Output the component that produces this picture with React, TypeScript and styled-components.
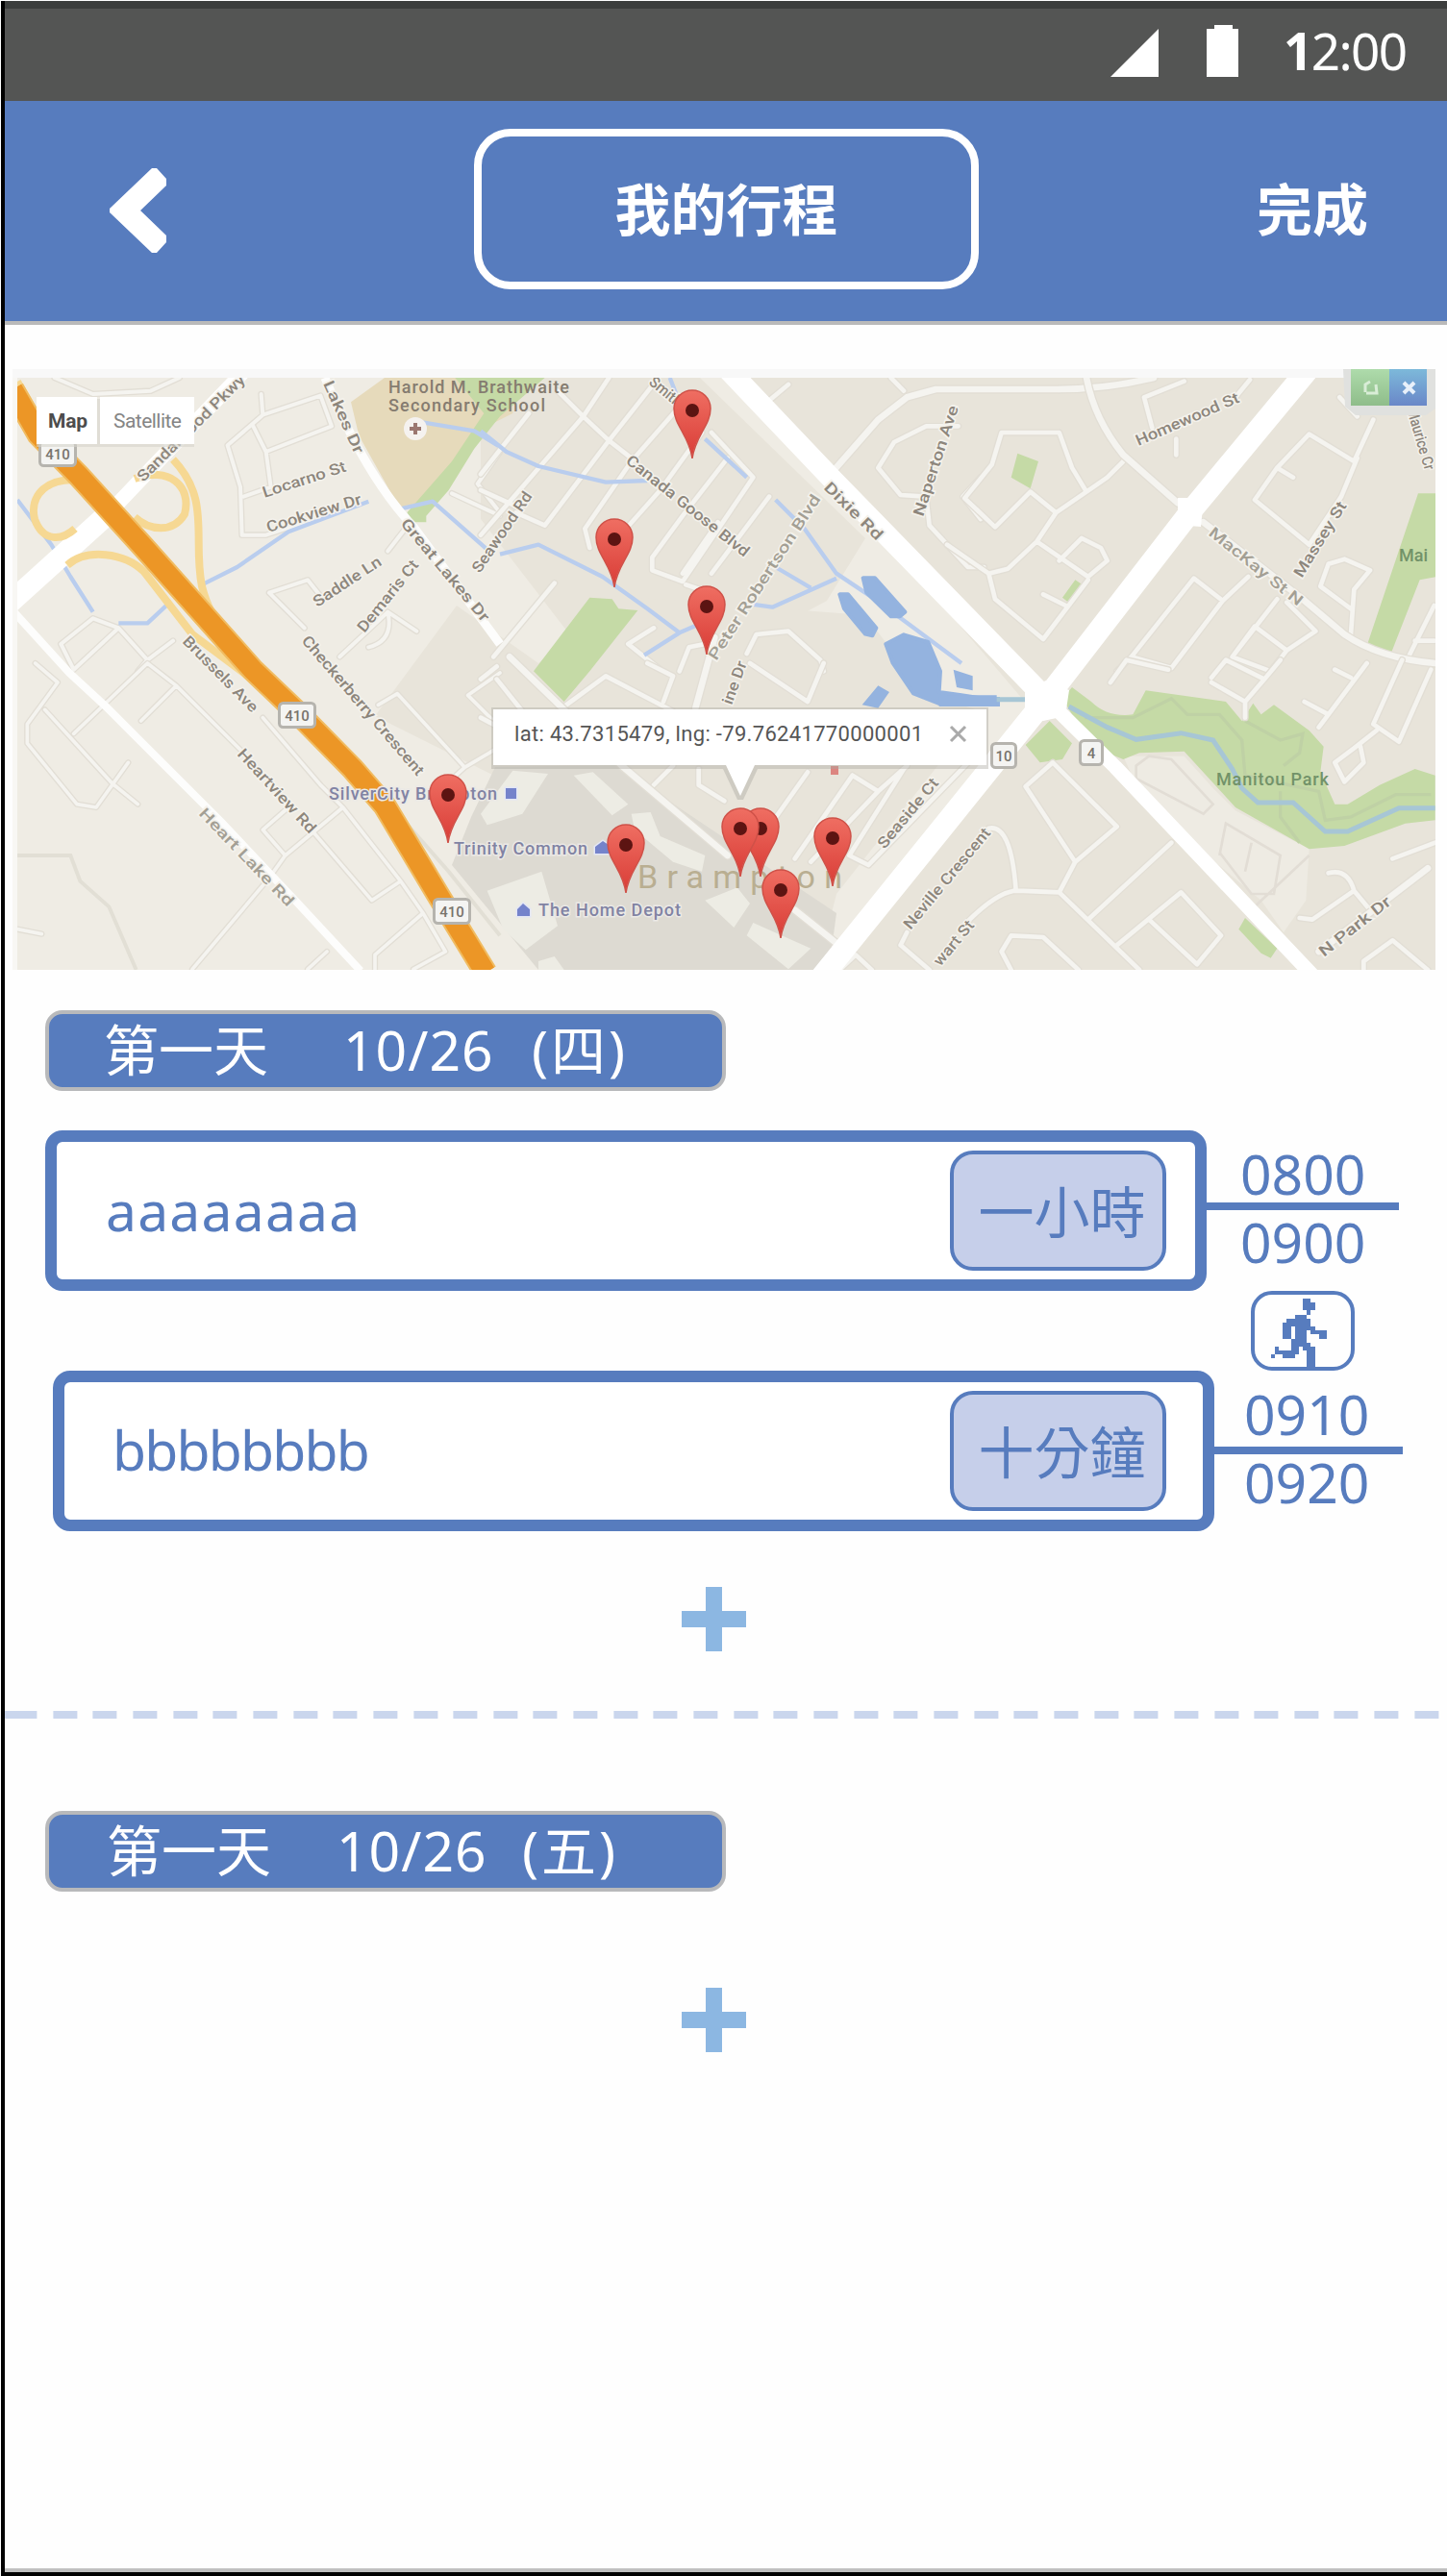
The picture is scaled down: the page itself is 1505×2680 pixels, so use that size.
import React from "react";
import styled, { createGlobalStyle } from "styled-components";

const BLUE = "#577cbe";
const MINOR = "#f5f4f0";

const GlobalStyle = createGlobalStyle`
  body { margin: 0; background: #fff; }
  * { box-sizing: border-box; }
`;

const Screen = styled.div`
  width: 1504px;
  height: 2679px;
  margin: 1px 0 0 1px;
  display: flex;
  flex-direction: column;
  border-left: 4px solid #000;
  border-bottom: 4px solid #000;
  background: #fefefe;
  color: ${BLUE};
  font-family: "Noto Sans", "Noto Sans CJK TC", sans-serif;
  font-size: 57px;
  line-height: 1;
  white-space: nowrap;
  overflow: hidden;
`;

const StatusBar = styled.div`
  flex: none;
  height: 104px;
  border-top: 8px solid #3c3e3d;
  background: #545554;
  color: #fff;
  display: flex;
  justify-content: flex-end;
  padding: 17px 40px 0 0;
`;

const StatusIcons = styled.svg`
  width: 134px;
  height: 54px;
  margin-right: 46px;
`;

const Clock = styled.div`
  width: 130px;
  font-size: 53px;
  line-height: 54px;
  letter-spacing: -1.6px;
  b { font-weight: 700; }
`;

const Header = styled.header`
  flex: none;
  height: 233px;
  border-bottom: 4px solid #bababa;
  background: ${BLUE};
  color: #fff;
  display: grid;
  grid-template-columns: 488px 525px 1fr;
  padding-top: 29px;
  font-weight: 700;
  font-size: 58px;
`;

const BackIcon = styled.svg`
  width: 60px;
  height: 88px;
  margin: 41px 0 0 108px;
`;

const Title = styled.h1`
  margin: 0;
  height: 167px;
  border: 8px solid #fff;
  border-radius: 38px;
  display: flex;
  align-items: center;
  justify-content: center;
  font: inherit;
`;

const Done = styled.div`
  height: 167px;
  display: flex;
  align-items: center;
  padding-left: 289px;
`;

const MapView = styled.svg`
  flex: none;
  display: block;
  width: 1480px;
  height: 625px;
  margin: 46px 0 42px 8px;
  font-family: Roboto, sans-serif;
`;

const DayLabel = styled.div<{ $indent: number; $gap: number }>`
  flex: none;
  width: 708px;
  height: 84px;
  margin-left: 42px;
  padding: 0 0 2px ${(p) => p.$indent}px;
  border: 4px solid #b8b9bb;
  border-radius: 18px;
  background: ${BLUE};
  color: #fff;
  display: flex;
  align-items: center;
  column-gap: ${(p) => p.$gap}px;
`;

const DayDate = styled.span`
  width: 150px;
  letter-spacing: 1px;
`;

const Weekday = styled.span<{ $pull: number }>`
  margin-left: -${(p) => p.$pull}px;
  letter-spacing: 3px;
`;

const Stop = styled.div<{ $shift?: number }>`
  flex: none;
  height: 167px;
  margin-left: ${(p) => 42 + (p.$shift || 0)}px;
  display: flex;
`;

const Card = styled.div`
  width: 1208px;
  height: 167px;
  border: 12px solid ${BLUE};
  border-radius: 18px;
  background: #fff;
  display: flex;
  justify-content: space-between;
  align-items: center;
`;

const Place = styled.div<{ $track: number; $lift: number; $left: number }>`
  padding: 0 0 ${(p) => p.$lift}px ${(p) => p.$left}px;
  letter-spacing: ${(p) => p.$track}px;
`;

const Duration = styled.div<{ $right: number }>`
  width: 225px;
  height: 125px;
  margin: 0 ${(p) => p.$right}px 0 0;
  padding: 2px 0 0 8px;
  border: 4px solid ${BLUE};
  border-radius: 24px;
  background: #c6cfea;
  font-size: 58px;
  display: flex;
  align-items: center;
  justify-content: center;
`;

const Times = styled.div<{ $top: number; $pad: number; $w: number }>`
  display: grid;
  grid-template-rows: ${(p) => p.$top}px 8px 1fr;
  width: ${(p) => p.$w}px;
  span { padding-left: ${(p) => p.$pad}px; letter-spacing: 0; }
  span:first-child { padding-top: 17px; }
  span:last-child { padding-top: ${(p) => 80 - p.$top}px; }
`;

const Rule = styled.div`
  background: ${BLUE};
`;

const Travel = styled.div`
  flex: none;
  width: 108px;
  height: 83px;
  margin-left: 1296px;
  border: 4px solid ${BLUE};
  border-radius: 22px;
  svg { display: block; width: 108px; height: 83px; margin: -4px; }
`;

const Plus = styled.button<{ $top: number }>`
  flex: none;
  width: 67px;
  height: 67px;
  margin: ${(p) => p.$top}px 0 0 704px;
  padding: 0;
  border: 0;
  background:
    linear-gradient(#8cb7e2, #8cb7e2) 0 25px / 67px 17px no-repeat,
    linear-gradient(#8cb7e2, #8cb7e2) 25px 0 / 17px 67px no-repeat;
`;

const Divider = styled.div`
  flex: none;
  height: 8px;
  margin: 62px 0 96px;
  background:
    linear-gradient(#cad6ed, #cad6ed) 0 0 / 10px 8px no-repeat,
    repeating-linear-gradient(90deg, #cad6ed 0 25px, transparent 25px 41.65px) 8.4px 0;
`;

const Gap = styled.div<{ $h: number }>`
  flex: none;
  height: ${(p) => p.$h}px;
`;

const BottomLine = styled.div`
  flex: none;
  height: 4px;
  margin-top: auto;
  background: #c0c0c0;
`;

/* Map sheets: each one is drawn on a 3x finer grid, placed by its corner. */
type SheetProps = { x: number; y: number; children: React.ReactNode };
const Sheet = ({ x, y, children }: SheetProps) => (
  <g transform={`translate(${x} ${y}) scale(0.33333)`}>{children}</g>
);

const Streets = ({ d, w = 14 }: { d: string; w?: number }) => (
  <g fill="none" strokeLinejoin="round" strokeLinecap="round">
    <path d={d} stroke="#e2ded5" strokeWidth={w + 8} />
    <path d={d} stroke={MINOR} strokeWidth={w} />
  </g>
);

const Water = ({ d }: { d: string }) => (
  <path d={d} fill="none" stroke="#b9cdee" strokeWidth={13} strokeLinejoin="round" />
);

const Green = ({ d }: { d: string }) => <path d={d} fill="#c5daa6" />;

type Name = [string, number, number, number, number, string?];
const NAMES: Name[] = [
  ["Sandalwood Pkwy", 149, 502, 256, 396],
  ["Lakes Dr", 336, 399, 369, 473],
  ["Great Lakes Dr", 416, 545, 502, 648],
  ["Locarno St", 275, 518, 361, 490],
  ["Cookview Dr", 279, 554, 377, 524],
  ["Saddle Ln", 330, 632, 398, 587],
  ["Demaris Ct", 379, 659, 436, 588],
  ["Brussels Ave", 189, 668, 262, 742],
  ["Checkerberry Crescent", 313, 667, 434, 808],
  ["Heartview Rd", 246, 785, 322, 868],
  ["Heart Lake Rd", 206, 847, 299, 944, "#a39f94"],
  ["Seawood Rd", 499, 597, 554, 516],
  ["Canada Goose Blvd", 650, 481, 774, 580],
  ["Peter Robertson Blvd", 745, 688, 854, 519, "#a39f94"],
  ["Dixie Rd", 856, 508, 912, 563],
  ["Smith", 674, 399, 704, 424],
  ["Naperton Ave", 960, 538, 997, 424],
  ["Homewood St", 1184, 464, 1290, 418],
  ["MacKay St N", 1256, 556, 1350, 631, "#a39f94"],
  ["Massey St", 1354, 602, 1401, 526],
  ["Maurice Cr", 1463, 426, 1482, 490],
  ["N Park Dr", 1377, 996, 1448, 940],
  ["Seaside Ct", 920, 884, 977, 815],
  ["Neville Crescent", 947, 968, 1031, 867],
  ["wart St", 978, 1006, 1014, 963],
  ["ine Dr", 761, 734, 777, 690],
];

const StreetName = ({ n }: { n: Name }) => {
  const [label, x1, y1, x2, y2, color] = n;
  const angle = (Math.atan2(y2 - y1, x2 - x1) * 180) / Math.PI;
  return (
    <text
      transform={`translate(${x1} ${y1}) rotate(${angle})`}
      fontSize="16"
      fontWeight="500"
      fill={color || "#8d867c"}
      stroke="#f4f2ec"
      strokeWidth="3"
      paintOrder="stroke"
      textLength={Math.hypot(x2 - x1, y2 - y1)}
      lengthAdjust="spacingAndGlyphs"
    >
      {label}
    </text>
  );
};

const Shield = ({ x, y, w = 37, t }: { x: number; y: number; w?: number; t: string }) => (
  <g>
    <rect x={x - w / 2} y={y - 12.5} width={w} height="25" rx="4" fill="#f4f4f2" stroke="#b6b4ae" strokeWidth="3" />
    <text x={x} y={y + 6} fontSize="15" fill="#77736c" textAnchor="middle" fontWeight="500">{t}</text>
  </g>
);

const Pin = ({ x, y }: { x: number; y: number }) => (
  <g transform={`translate(${x} ${y})`}>
    <path d="M0 0C-3-24-19-34-19-52A19 19 0 0 1 19-52C19-34 3-24 0 0Z" fill="url(#pin)" stroke="#cf5148" strokeWidth="1.5" />
    <circle cy="-50" r="7" fill="#5c1412" />
  </g>
);

const PINS = [[720, 477], [639, 611], [735, 681], [466, 877], [651, 929], [791, 912], [770, 912], [866, 922], [812, 976]];

const TripMap = () => (
  <MapView viewBox="13 384 1480 625">
    <defs>
      <linearGradient id="pin" x1="0" y1="0" x2="0" y2="1">
        <stop offset="0" stopColor="#ef6e62" />
        <stop offset="1" stopColor="#d93c36" />
      </linearGradient>
      <linearGradient id="green" x1="0" y1="0" x2="0" y2="1">
        <stop offset="0" stopColor="#aedbab" /><stop offset="1" stopColor="#8fbd8a" />
      </linearGradient>
      <linearGradient id="blue" x1="0" y1="0" x2="0" y2="1">
        <stop offset="0" stopColor="#7db9da" /><stop offset="1" stopColor="#6a87c8" />
      </linearGradient>
      <clipPath id="frame"><rect x="18" y="393" width="1475" height="616" /></clipPath>
    </defs>
    <rect x="13" y="384" width="1480" height="10" fill="#f8f8f8" />
    <rect x="13" y="393" width="1480" height="616" fill="#f8f7f4" />
    <g clipPath="url(#frame)">
      <rect x="18" y="393" width="1475" height="616" fill="#efece4" />
      <path d="M500 393H728L900 560L860 625L720 700L600 670L500 540ZM780 393H1493V1009H870L1070 735L870 500Z" fill="#e8e4da" />
      <path d="M390 745L475 630L560 690L640 620L900 640L960 720L1020 740L870 930L850 1009H780L600 850L500 800Z" fill="#e8e4da" />
      <path d="M490 850L515 798L640 796L870 950L862 1009H560L470 900Z" fill="#dddad2" />

      <Sheet x={0} y={370}>
        <path d="M1095 145L1200 69H1600V180L1500 230L1380 400L1350 440L1250 482L1120 250Z" fill="#e6dabb" />
        <Green d="M1420 69H1700L1560 190L1480 290L1400 420L1330 500L1330 520H1290L1270 490L1410 330L1510 180Z" />
        <Streets d="M170 69L290 120L470 110L560 69M815 120L820 185L780 220L710 280L750 410L755 560L830 560L950 520M820 185L1000 125L1035 220L830 300L845 410L760 440M790 220L830 300M1560 300L1490 400L1560 490M840 740L960 700L1000 750M840 740L950 850M1060 940L1210 800L1300 860M1210 800Q1230 890 1150 910M1560 500L1410 430M1280 520L1210 610M190 900L290 820L370 850L460 950L540 890M190 900L230 980L370 850M460 950L430 985" w={12} />
        <Water d="M54 450L160 590L220 690L290 800M370 835H460L530 770M630 715L740 660L900 550L1150 455M1250 478L1350 455L1520 605M1300 205L1480 235L1560 285" />
      </Sheet>

      <Sheet x={500} y={370}>
        <Green d="M340 755L410 760L430 790L490 795L340 985L260 1080L165 985Z" />
        <Streets d="M240 110L320 190L400 265L470 320M150 180L0 370M400 69L320 190L0 560M530 100L400 265L200 530L110 490M610 170L470 330L325 540L340 600M690 240L560 420L400 600M770 320L630 500L535 630L535 670L630 705L850 380L720 240M740 520L630 680M900 440L720 680M0 420L110 470M40 940L230 710M640 715L700 735M460 900L540 850M460 900L560 980M620 985L650 910L700 900M830 930L860 870L960 860L1060 950L1070 985M900 140L960 90M1320 110L1280 69M1490 220H1390L1290 270L1240 350L1310 435L1390 440L1400 530L1520 660H1570M1560 380L1505 440L1560 510" />
        <Streets d="M1100 360L1240 200L1330 130L1420 105H1800Q1950 105 2100 69" w={20} />
        <Water d="M0 235L80 300L180 345L390 395L520 390M590 69L610 120M700 260L830 380M920 450L1010 540L1110 680L1230 760L1500 960M60 620L180 590L380 690L520 790L620 865L510 935M620 865L700 830M840 775L910 785L1110 695M920 660L1030 725" />
        <g fill="#94b3df" stroke="#94b3df" strokeWidth="12" strokeLinejoin="round">
          <path d="M1193 694L1230 694L1324 800L1308 814H1280L1204 740ZM1120 745L1146 745L1234 850L1222 874L1200 869L1134 790ZM1264 900L1320 871L1396 894L1434 985L1430 1050L1500 1060L1600 1075V1088L1430 1086L1350 1054L1286 960Z" />
        </g>
      </Sheet>

      <Sheet x={985} y={370}>
        <Green d="M220 305L285 330L260 415L200 380ZM400 700L430 720L385 775L360 755ZM1470 430H1530V690L1475 700L1385 930L1310 905Z" />
        <Streets d="M170 240H350L390 350L435 425L340 490L260 425L150 535L55 445L140 340ZM550 330L500 380L435 425M340 490L280 580L190 665L130 680L0 590M280 580L440 690L500 640L480 600L420 570L350 640M130 680L150 760L300 885L440 700M300 745L370 780M640 225L615 130L740 80M715 260V310M945 75L900 130M1330 200L1270 330L1130 245L1030 350L960 450L1130 590L1230 440L1280 320M1030 350L1080 380M940 690L860 765L770 695L575 940L700 975L860 765M575 940L530 985M1030 760L890 940L1010 985M890 940L960 845L1060 920L1150 860L1060 770M1060 920L1010 985M1190 650L1240 635L1320 670L1270 730L1260 870M1190 650L1165 720L1260 790M1520 780L1440 940M1460 890H1520M1225 130L1280 190" />
        <Streets d="M435 69Q460 200 550 310L720 460M800 520L1110 760L1240 870Q1350 945 1523 960" w={20} />
      </Sheet>

      <Sheet x={0} y={690}>
        <path d="M54 600H220L250 680L340 760L425 957M1180 400L1400 650L1560 850" fill="none" stroke="#e2dfd5" strokeWidth="12" />
        <Streets d="M110 0L180 60L85 190V250L240 440L300 450L400 310M140 145L350 375L430 440M230 220L460 0L550 70L440 180M550 70L750 270M820 170L1000 380M820 520L900 450M820 520L890 600L840 670L600 955M890 600L1070 450L1250 680L1160 740L980 530M1070 450L1000 380M1250 680L1320 780L1390 900L1290 955M1320 780L1170 910V955M960 955L1020 900M1180 130L1240 95L1450 325L1560 260M1450 325L1400 370M1560 30L1460 100L1560 200M54 830L130 845" w={11} />
      </Sheet>

      <Sheet x={500} y={690}>
        <g fill="#edece4">
          <path d="M100 335L210 345L130 470L20 505L0 470ZM290 350L350 340L460 440L410 475ZM470 470L530 465L560 540L700 600L690 650L600 620L480 520ZM20 710L190 650L240 820L140 895L70 830ZM700 740L800 700L840 750L790 825ZM850 810L1030 890L960 955L830 850ZM180 930L230 915L260 957H180Z" />
        </g>
        <Streets d="M50 50L130 150M0 50L50 10M240 150L390 40L600 150M520 0L600 40L570 120M840 0L1020 120L1070 0M0 170L150 250M680 330V380L760 430M1020 340L900 510M1160 350L980 610M1160 350L1240 400L1330 320M1240 400L1030 620M1320 330L1150 600L1210 630L1560 270M1310 880L1400 957M1310 880L1330 840M1120 957L1170 910L1220 957M540 380L600 320" />
        <Streets d="M90 -20L260 145L440 320L770 600M670 140L730 -80M980 770L1130 890" w={20} />
        <path d="M1190 130L1240 70L1275 90L1240 140ZM1430 105H1620V135H1430ZM1480 30L1530 50V80L1490 75Z" fill="#94b3df" />
      </Sheet>

      <Sheet x={985} y={690}>
        <path d="M550 290H740L830 390L900 460L1130 580L1120 740L1050 840L980 740L740 540L590 380Z" fill="#eeebe3" />
        <Green d="M390 75L450 120Q500 170 580 160L620 85L870 120L920 180L955 125L980 160L1020 130L1130 210L1175 260L1165 340L1210 440H1250L1350 380L1460 330L1523 350V490L1430 500L1240 570L1130 580L900 450L740 275L600 280L550 300L500 280L390 160L360 110ZM320 180L390 250L360 300L290 310L245 255ZM930 795L1030 890L1010 920L980 905L910 830Z" />
        <path d="M430 170H580L700 110L750 160H850L920 240L930 350M930 180L1040 240L1110 220L1100 280L1050 320M930 350L1160 400L1180 490L1260 480L1400 410H1510M1040 400V480L1100 560" fill="none" stroke="#bfd1a5" strokeWidth="10" />
        <path d="M380 135L500 200L590 238L730 218L830 240L890 330L920 390L970 435H1080L1180 525H1250L1410 452H1523M130 113H260" fill="none" stroke="#a7c6d5" strokeWidth="15" />
        <path d="M0 100H155V130H0ZM20 20L80 40V85L30 75Z" fill="#94b3df" />
        <Streets d="M510 60L560 -10L690 20M825 45L870 -10L990 50L930 120L825 60M930 120V170M990 50L1040 -10M1115 120L1190 160L1310 0M1160 200L1190 160M1210 20L1260 45M1420 -10L1330 190L1410 245L1510 20M1340 210L1270 265L1210 310L1240 370L1300 310L1290 260M245 385L330 310L530 510L400 620ZM130 515Q200 500 215 710M400 620L350 715M60 810Q160 710 220 710L350 715L600 957M700 560L440 800M530 880L730 715L855 850L780 940L630 800M200 957L170 900L200 850L300 855L410 957M1190 655Q1250 640 1270 710L1140 800L1100 795M1270 710L1320 770M1390 610L1523 560M1300 957V930L1390 865L1500 957" />
        <path d="M590 320L630 290L700 300L830 440L800 470L590 360ZM850 600L870 500L1040 600L1020 720H950L850 590M950 560L930 650M1130 600L960 760" fill="none" stroke="#e2ddd5" strokeWidth="8" />
        <Streets d="M1160 900L1500 640" w={20} />
      </Sheet>

      <path d="M13 635L72 700L110 735L230 855L310 940L375 1010" fill="none" stroke="#fdfdfc" strokeWidth="8" />
      <path d="M338 393Q380 495 430 548L520 670" fill="none" stroke="#fdfdfc" strokeWidth="9" />
      <path d="M5 632L112 535" stroke="#fff" strokeWidth="22" />
      <path d="M112 535L150 495L255 385" fill="none" stroke="#fff" strokeWidth="15" />
      <g fill="none" stroke="#f6d893" strokeWidth="8">
        <path d="M85 500C50 495 30 515 36 540C45 565 65 562 78 550M140 498C175 485 200 505 192 535C180 555 155 552 140 538M180 478C220 520 200 560 210 610C220 650 235 650 260 695M70 588C90 570 130 575 150 595L200 660L260 705M18 397L34 425" />
      </g>
      <path d="M13 405L40 452L82 495L150 570L263 697L310 742L367 800L400 838L455 930L505 1012" fill="none" stroke="#f0bc62" strokeWidth="25" />
      <path d="M13 405L40 452L82 495L150 570L263 697L310 742L367 800L400 838L455 930L505 1012" fill="none" stroke="#ec9626" strokeWidth="21" />
      <g fill="none" stroke="#fff" strokeLinejoin="round">
        <path d="M753 380L867 500L1088 727" strokeWidth="22" />
        <path d="M1088 727L1160 798L1375 1025" strokeWidth="15" />
        <path d="M1370 373L1240 530L1115 692L1088 727L985 855L850 1022" strokeWidth="23" />
      </g>
      <path d="M1225 518L1252 518L1249 548L1225 546ZM1066 718L1088 708L1112 718L1108 745L1085 750L1066 742Z" fill="#fff" />

      <g fill="#857c70" fontSize="18" fontWeight="500">
        <text x="404" y="409" textLength="188">Harold M. Brathwaite</text>
        <text x="404" y="428" textLength="163">Secondary School</text>
      </g>
      <circle cx="432" cy="446" r="12" fill="#f5f2ef" /><path d="M426 446H438M432 440V452" stroke="#9b7770" strokeWidth="4" />
      {NAMES.map((n) => <StreetName key={n[0] + n[1]} n={n} />)}
      <g fill="#8183a3" fontSize="18" fontWeight="500" stroke="#ebe9e6" strokeWidth="3" paintOrder="stroke">
        <text x="342" y="832" textLength="175">SilverCity Brampton</text>
        <text x="472" y="889" textLength="139">Trinity Common</text>
        <text x="560" y="953" textLength="148">The Home Depot</text>
      </g>
      <g fill="#7583cb" stroke="#e3e6f5" strokeWidth="3" paintOrder="stroke">
        <path d="M526 820H537V831H526ZM619 888V881L627 875L636 881V888ZM538 953V946L544 940L551 946V953Z" />
      </g>
      <text x="663" y="924" fontSize="34" fill="#b9ae91" textLength="213">Brampton</text>
      <g fill="#729269" fontSize="18" fontWeight="500">
        <text x="1265" y="817" textLength="117">Manitou Park</text>
        <text x="1455" y="584">Mai</text>
      </g>
      <Shield x={60} y={472} t="410" />
      <Shield x={309} y={744} t="410" />
      <Shield x={470} y={948} t="410" />
      <Shield x={1044} y={786} w={25} t="10" />
      <Shield x={1135} y={783} w={23} t="4" />
    </g>

    <rect x="38" y="415" width="164" height="50" fill="#d6d3cc" opacity="0.6" />
    <path d="M38 413H101V462H38ZM104 413H202V462H104Z" fill="#fff" />
    <text x="50" y="445" fontSize="21" fontWeight="700" fill="#4c4c4c" textLength="41">Map</text>
    <text x="118" y="445" fontSize="21" fill="#858585" textLength="71">Satellite</text>

    <path d="M1397 384H1493V425L1483 432H1410L1399 423Z" fill="#e0e1df" />
    <rect x="1405" y="384" width="40" height="38" fill="url(#green)" />
    <rect x="1445" y="384" width="39" height="38" fill="url(#blue)" />
    <path d="M1420 408V400L1425 397M1431 400L1432 409L1421 409" fill="none" stroke="#d9edd7" strokeWidth="3" />
    <path d="M1460 398L1471 409M1471 398L1460 409" stroke="#e8f0fa" strokeWidth="4" />

    <rect x="864" y="797" width="8" height="9" fill="#dc8580" />
    <path d="M511 736H1028V800H788L773 832H767L752 800H511Z" fill="#a7a49d" opacity="0.4" />
    <path d="M513 738H1026V796H785L770 828L755 796H513Z" fill="#fff" />
    <text x="535" y="771" fontSize="22" fill="#555" textLength="425">lat: 43.7315479, lng: -79.76241770000001</text>
    <path d="M989 756L1004 771M1004 756L989 771" stroke="#aaa" strokeWidth="3" />
    {PINS.map(([x, y]) => <Pin key={`${x}-${y}`} x={x} y={y} />)}
  </MapView>
);

/* The running figure, row by row: [y, height, x, width]. */
const FIGURE = [
  [603, 13, 1152, 22], [615, 25, 1152, 36], [640, 14, 1162, 12], [654, 12, 1130, 32],
  [666, 12, 1105, 69], [678, 12, 1093, 81], [690, 39, 1093, 25], [690, 12, 1130, 58],
  [702, 39, 1130, 32], [702, 12, 1174, 47], [714, 15, 1199, 22], [729, 24, 1118, 44],
  [741, 12, 1118, 56], [753, 12, 1071, 11], [753, 24, 1118, 22], [753, 12, 1152, 36],
  [765, 12, 1071, 69], [777, 12, 1060, 11], [777, 12, 1093, 37], [765, 52, 1162, 26],
];

const Runner = () => (
  <svg viewBox="1002 579 300 249" preserveAspectRatio="none" shapeRendering="crispEdges" fill={BLUE}>
    {FIGURE.map(([y, h, x, w]) => <rect key={`${x}-${y}-${w}`} x={x} y={y} width={w} height={h} />)}
  </svg>
);

export default function App() {
  return (
    <>
      <GlobalStyle />
      <Screen>
        <StatusBar>
          <StatusIcons viewBox="0 0 134 54" fill="#fff">
            <path d="M0 54L50 4V54ZM100 4H108V0H127V4H133V54H100Z" />
          </StatusIcons>
          <Clock><b>1</b>2:00</Clock>
        </StatusBar>
        <Header>
          <BackIcon viewBox="0 0 60 88" fill="#fff">
            <path d="M45 0H50L60 11V18L33 44L60 70V77L50 88H45L1 46V42Z" />
          </BackIcon>
          <Title>我的行程</Title>
          <Done>完成</Done>
        </Header>
        <TripMap />
        <DayLabel $indent={57} $gap={78}>
          <span>第一天</span><DayDate>10/26</DayDate><Weekday $pull={32}>(四)</Weekday>
        </DayLabel>
        <Gap $h={41} />
        <Stop>
          <Card>
            <Place $track={1.2} $lift={0} $left={51}>aaaaaaaa</Place>
            <Duration $right={30}>一小時</Duration>
          </Card>
          <Times $top={75} $pad={35} $w={200}>
            <span>0800</span><Rule /><span>0900</span>
          </Times>
        </Stop>
        <Travel><Runner /></Travel>
        <Stop $shift={8}>
          <Card>
            <Place $track={-1.8} $lift={2} $left={50}>bbbbbbbb</Place>
            <Duration $right={38}>十分鐘</Duration>
          </Card>
          <Times $top={79} $pad={31} $w={196}>
            <span>0910</span><Rule /><span>0920</span>
          </Times>
        </Stop>
        <Plus $top={58} aria-label="plus" />
        <Divider />
        <DayLabel $indent={60} $gap={68}>
          <span>第一天</span><DayDate>10/26</DayDate><Weekday $pull={25}>(五)</Weekday>
        </DayLabel>
        <Plus $top={100} aria-label="plus" />
        <BottomLine />
      </Screen>
    </>
  );
}
